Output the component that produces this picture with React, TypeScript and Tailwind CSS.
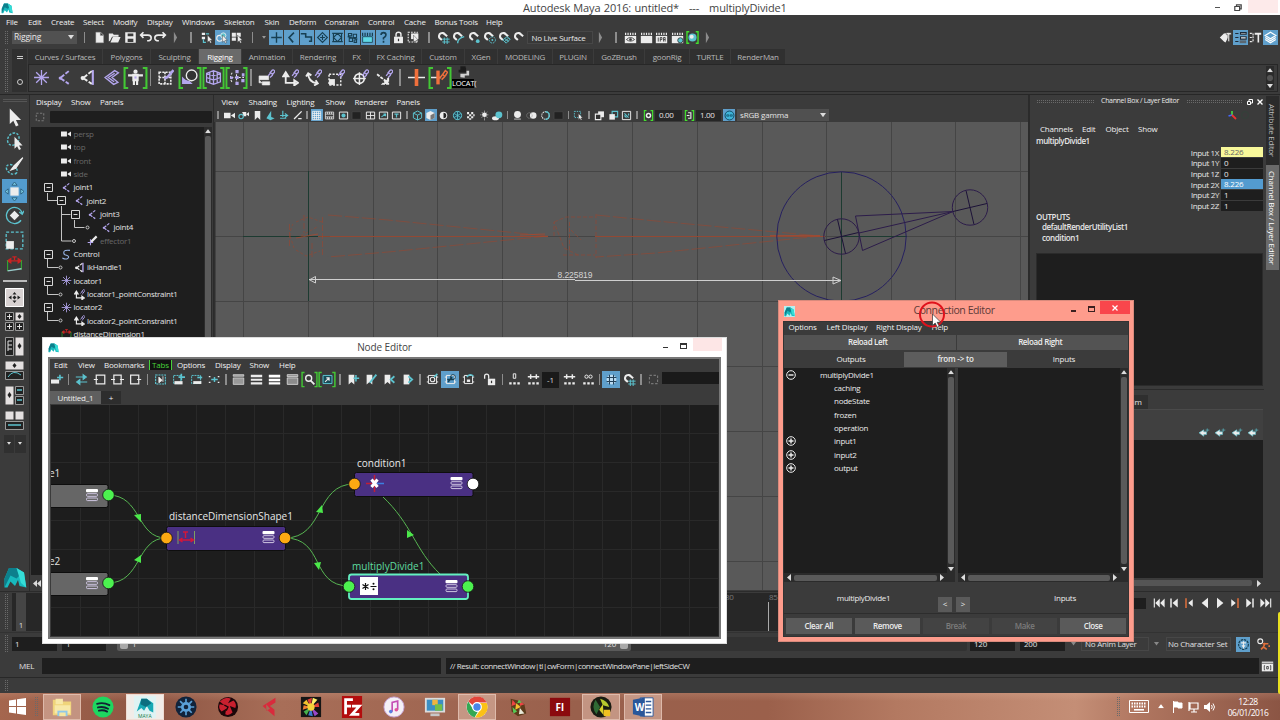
import React from "react";
import clsx from "clsx";

const C = "#5cc3cf"; // cyan
const P = "#b4a6ee"; // purple
const W = "#ececec";
const N = "#173f52"; // navy, for icons on a blue cell

const magnet = <path d="M3 8.5A4 4 0 0 1 10 4.500L12.500 6.500M3 8.500L6 11" fill="none" stroke={W} strokeWidth="2.6" />;
const clap = (
  <>
    <path d="M1 6h14v9H1z" fill={W} />
    <path d="M2 2v3M5 2v3M8 2v3M11 2v3M14 2v3" stroke={W} strokeWidth="1.5" />
  </>
);
const link = <path d="M9.500 6.500l2-2.500a1.500 1.500 0 0 1 2 2l-2.200 2M11 4l2.500-3a1.500 1.500 0 0 1 2 2L13 6" fill="none" stroke={P} strokeWidth="1.2" />;
const graph = <path d="M3 3h10v10H3zM1 5h2M1 11h2M13 5h2M13 11h2" fill="none" stroke={W} strokeWidth="1.2" />;
const dots = <path d="M1.500 11.500h3V14h-3zM6.500 11.500h3V14h-3zM11.500 11.500h3V14h-3z" fill={W} />;
const arrow = <path d="M8 5v9l2-2 1.500 3 1.500-.8-1.500-2.700H14z" fill={W} stroke="#333" strokeWidth=".5" />;
const bookmark = <path d="M2 2h7v12l-3.500-3L2 14z" fill={W} />;
const frame = <path d="M2 3h12v10H2z" fill="none" stroke={W} strokeWidth="1.4" />;

const icons: Record<string, React.ReactNode> = {
  file: <path d="M3.500 1.500h6L13 5v9.500H3.500zM9 1.500v4h4" fill={W} stroke="#999" strokeWidth=".5" />,
  open: <path d="M1 13V3h5l1 1.500h6V7H5L2.500 12M3 14l3-6.500h9.500L12.500 14z" fill={W} />,
  save: <path d="M1.500 1.500h13v13h-13zM4.500 3v3.500h7V3zM4.500 9.500v4h7v-4z" fill={W} fillRule="evenodd" />,
  undo: <path d="M2 5h9q4 0 4 3.500T10 12M5.500 1.500L2 5l3.500 3.500" fill="none" stroke={W} strokeWidth="2" />,
  redo: <path d="M14 5H5q-4 0-4 3.500T6 12M10.500 1.500L14 5l-3.500 3.500" fill="none" stroke={W} strokeWidth="2" />,
  bar: <path d="M6 1l4 7-4 7z" fill="#8c8c8c" />,
  selh: <><path d="M1 2h4v3H1zM1 7h4v3H1z" fill={W} /><path d="M6 3.500h4M3 10v4h3" stroke={C} fill="none" strokeWidth="1.5" />{arrow}</>,
  selo: <><circle cx="4.500" cy="9" r="3.600" fill="none" stroke={W} strokeWidth="1.4" /><circle cx="9" cy="5.500" r="3.200" fill={C} stroke={W} />{arrow}</>,
  selc: <><path d="M1 2h5v5H1zM7 2h5v5H7zM1 8h5v4H1z" fill={W} />{arrow}</>,
  plus: <path d="M8 1.500v13M1.500 8h13" stroke={N} strokeWidth="1.7" />,
  angle: <path d="M11 2L5 8l5 6" stroke={N} strokeWidth="2" fill="none" />,
  curve: <path d="M1 3.500h6v4h7v5h-3" stroke={N} strokeWidth="1.9" fill="none" />,
  diamond: <path d="M8 2l6 6-6 6-6-6zM8 5v6M5 8h6" stroke={N} strokeWidth="1.4" fill="none" />,
  lattice: <path d="M3 3h10v10H3zM3 8l5-5 5 5-5 5zM1.500 3h3M11.500 3h3M1.500 13h3M11.500 13h3" stroke={N} strokeWidth="1.4" fill="none" />,
  dyn: <path d="M3 3h4v3H3zM9 4h4v4H9zM4 9h4v4H4zM10 11h3v3h-3zM2 7l12 3" stroke={N} strokeWidth="1.3" fill="none" />,
  rend: <><path d="M2 7h12v7H2z" fill="#5fd8e4" stroke={N} /><path d="M2 2v4M5 2v4M8 2v4M11 2v4M14 2v4" stroke={N} strokeWidth="1.5" /></>,
  quest: <path d="M5 5q0-3 3-3t3 3q0 2-3 3.500v2M8 12v2.500" stroke={N} strokeWidth="2" fill="none" />,
  lock: <><path d="M2.500 7h11v8h-11z" fill={W} /><path d="M5 7V4q0-2.500 3-2.500T11 4v3" fill="none" stroke={W} strokeWidth="1.8" /><path d="M8 9.500v3" stroke="#333" strokeWidth="1.5" /></>,
  unlock: <><path d="M6 7h9v8H6z" fill={W} /><path d="M7 7V4q0-2.500-2.500-2.500T2 4v3" fill="none" stroke={W} strokeWidth="1.6" /><path d="M10.500 9.500v3" stroke="#333" strokeWidth="1.5" /></>,
  hili: <><path d="M1.500 1.500h11v12h-11z" fill="none" stroke={W} strokeWidth="1.4" strokeDasharray="2 1.500" /><path d="M5 3h9v7H5z" fill={W} />{arrow}</>,
  mgrid: <>{magnet}<path d="M9 8v8M12.500 8v8M6.500 10h9M6.500 13.500h9" stroke={C} strokeWidth="1.200" /></>,
  mcurve: <>{magnet}<path d="M7 15q0-6 8-8" stroke={C} strokeWidth="1.7" fill="none" /></>,
  mpoint: <>{magnet}<circle cx="12" cy="12.500" r="2.300" fill={C} /></>,
  mproj: <>{magnet}<circle cx="11.500" cy="11" r="3.800" fill="none" stroke={C} strokeDasharray="2 1.200" strokeWidth="1.200" /><circle cx="11.500" cy="11" r="1.200" fill={C} /></>,
  mplane: <>{magnet}<path d="M6 11l5-4 4 3-5 5zM8 9l5 4M8 13l5-4" fill="none" stroke={C} strokeWidth="1.200" /></>,
  mlive: magnet,
  clapeye: <>{clap}<path d="M3 10.500q5-5 10 0q-5 4-10 0z" fill="none" stroke="#333" /><circle cx="8" cy="10.500" r="1.600" fill="#333" /></>,
  clap,
  clapipr: <>{clap}<path d="M4 8v5M6.500 13V8h2v2.500h-2M10.500 13V8h2v5M10.500 10.500h2" fill="none" stroke="#333" /></>,
  clapset: <>{clap}<circle cx="11.500" cy="11.500" r="3.200" fill={C} stroke="#333" /></>,
  render: <><path d="M4 1H1.200v14H4M12 1h2.800v14H12" stroke="#43e02f" strokeWidth="1.700" fill="none" /><circle cx="8" cy="8" r="5" fill={C} /><circle cx="7" cy="7" r="2.500" fill={W} /></>,
  modkit: <><path d="M1 8l5-5v10zM6 3l6-1v4l-4 8-2-1z" fill={W} /><path d="M9 2h6v2.500h-2V13h-2V4.500H9z" fill={W} stroke="#333" strokeWidth=".6" /></>,
  attred: <><path d="M1.500 3h4M1.500 8h4M1.500 13h4M8 2h7v2H8zM8 7h7v3H8z" stroke="#1d2a38" fill={W} strokeWidth="1.3" /><path d="M7 11.500h8V15H7z" fill="#5b6770" /></>,
  toolset: <><path d="M1 3h4M1 8h4M1 13h4M5 3v10" stroke={W} strokeWidth="1.400" strokeDasharray="2.500 1" /><path d="M7 2h8v2.500h-2.500V14h-2V4.500H7z" fill={W} /></>,
  layers: <path d="M8 1.500l6.500 4L8 9.500l-6.500-4zM1.500 8L8 12l6.500-4M1.500 10.500L8 14.500l6.500-4" fill="none" stroke="#fff" strokeWidth="1.5" />,
  // shelf
  locator: <path d="M8 1v14M1 8h14M3 3l10 10M13 3L3 13" stroke={P} strokeWidth="1.2" />,
  joint: <><path d="M12 2L4 8.500 12 14" fill="none" stroke={P} strokeWidth="1.800" strokeDasharray="4 1.500" /><circle cx="4" cy="8.500" r="1.500" fill={P} /></>,
  ik: <><path d="M13 1v14" stroke={P} strokeWidth="2" /><path d="M12 2L4 8.500 12 14" stroke={W} strokeWidth="1.800" fill="none" strokeDasharray="4 1.500" /><circle cx="3.500" cy="8.500" r="2" fill={W} /></>,
  bind: <path d="M11 1.500L2 8l8 6.500 4-2L8.500 8l6-4.500zM11 4L5 8l5.500 4" fill="none" stroke={P} strokeWidth="1.3" />,
  human: <><circle cx="8" cy="2.500" r="2" fill={W} /><path d="M1 6h14M6 5.500h4v5H6zM6.500 10v5M9.500 10v5" stroke={W} strokeWidth="2" fill={W} /><path d="M7 7h2v2H7z" fill={P} /></>,
  paintw: <><path d="M2 3h11v11H2zM2 8h11M7.500 3v11" fill="none" stroke={W} strokeWidth="1.500" strokeDasharray="2 1" /><path d="M15.500 1L10 7.500 7 9" stroke={P} strokeWidth="2.400" fill="none" /></>,
  blend: <><path d="M1 14V7q3 4 7 4l3 3z" fill={P} /><circle cx="10" cy="6" r="5" fill="#333" stroke={W} strokeWidth="1.3" /></>,
  cage: <path d="M1.500 4L8 1.500 14.500 4v8L8 14.500 1.500 12zM1.500 4L8 6.500 14.500 4M8 1.500v13M1.500 8L8 10.500 14.500 8M4.500 3v10M11.500 3v10" fill="none" stroke={P} strokeWidth="1.200" />,
  cluster: <><path d="M8 1.500v13M3 8h12M4 3.500A7 7 0 0 0 4 12.500" fill="none" stroke={W} strokeDasharray="2 1.500" /><path d="M7 1h3v3H7zM13 4h2.500v3H13zM7 6.500h3v3H7zM12.500 9.500h3v3h-3zM7 12h3v3H7zM2 7h2.500v2.500H2z" fill={P} /></>,
  parent: <><path d="M1 6.500h9V10H1zM4 12h7v3H4zM1 10v3h3" fill={W} stroke={W} strokeWidth=".6" />{link}</>,
  pointc: <><path d="M3.500 5v8H13M3.500 3L1 7h5zM15 13l-3.500-2.500v5z" fill="none" stroke={W} strokeWidth="1.700" />{link}</>,
  orient: <><path d="M3 4q0 8 8 9.500M1 7l2-3 3 2M8.500 15.500L12 13.500l-2-3" fill="none" stroke={W} strokeWidth="1.800" />{link}</>,
  scalec: <><path d="M1 5h11v10H1z" fill="none" stroke={W} strokeWidth="1.400" strokeDasharray="2 1.300" /><path d="M1 9.500h5.500V15H1z" fill={W} />{link}</>,
  aim: <><circle cx="7" cy="9" r="4.500" fill="none" stroke={W} strokeWidth="1.600" /><path d="M7 3v12M1 9h12" stroke={W} strokeWidth="1.400" />{link}</>,
  pole: <><path d="M1 5l9 7M11.500 9v5h-5z" stroke={W} strokeWidth="1.700" fill={W} strokeDasharray="3 1" />{link}</>,
  orange: <><path d="M0 8h16" stroke={W} strokeWidth="1.4" /><path d="M6.300 0h3.400v16H6.300z" fill="#f0703c" /></>,
  orangel: <><path d="M0 8h9" stroke={W} strokeWidth="1.4" /><path d="M5 1.500h3.200v13H5z" fill="#f0703c" /><path d="M8 9l3-4 2 2-3 3M11 5l2.500-3.500 2 1.500-2 3.500" fill="none" stroke="#f0703c" strokeWidth="1.4" /></>,
  python: <><path d="M5 1.500h6v6H5z" fill="#1c1c1c" /><path d="M3 7h7V3" fill="none" stroke="#1c1c1c" strokeWidth="3" /><path d="M5 14v-4h7V6.500h3V12h-5v2.500z" fill="#d0d0d0" /></>,
  // toolbox
  cursor: <path d="M4 .5v13l3-2.800L9.200 15.500l2.200-1L9.200 10h4.300z" fill={W} />,
  lasso: <><ellipse cx="7" cy="6" rx="4.500" ry="5.500" transform="rotate(35 7 6)" fill="none" stroke={C} strokeWidth="1.200" strokeDasharray="2 1.200" /><path d="M8 4v10l2.200-2 1.600 3.200 1.700-.8-1.700-3h3z" fill={W} /></>,
  paint: <><ellipse cx="6" cy="10.500" rx="5" ry="3.500" transform="rotate(35 6 10)" fill="none" stroke={C} strokeWidth="1.200" strokeDasharray="2 1.200" /><path d="M15 .5L8 7l-3 4 4-1.500z" fill={W} stroke={W} /></>,
  move: <><path d="M4.500 4.500h7v7h-7z" fill={W} /><path d="M8 0l2.200 2.700H5.800zM8 16l2.200-2.700H5.800zM0 8l2.700-2.200v4.400zM16 8l-2.700-2.200v4.400z" fill="#7ccbe6" stroke="#285a77" strokeWidth=".7" /></>,
  rotate: <><path d="M8 4l4 4-4 4-4-4z" fill={W} /><path d="M13.500 12A6.800 6.800 0 1 1 14.500 6M16 4l-1.500 3-2.500-2" fill="none" stroke={C} strokeWidth="1.100" /></>,
  scale: <><path d="M1 1h14v14H1z" fill="none" stroke={C} strokeDasharray="2.500 1.500" strokeWidth="1.100" /><path d="M1 8.500h6.500V15H1z" fill={W} /></>,
  dist: <><path d="M1.500 4.500h13M1.500 4.500l3-2v4zM14.500 4.500l-3-2v4zM6 .8h4M8 .8v3" fill="#c22" stroke="#c22" strokeWidth="1.2" /><path d="M1.500 4v10M14.500 4v9" stroke="#3a3" /><path d="M1.500 14l13-2" stroke="#9cc" strokeWidth="1.2" /></>,
  // panel bar
  cam: <path d="M0 4h9.500v8H0zM10 8l6-4v8z" fill={W} />,
  camb: <><circle cx="4.500" cy="9.500" r="3.200" fill="none" stroke={C} strokeWidth="1.700" /><path d="M6 3h6v6H8.500zM12 6l4-3v6z" fill={W} /></>,
  book: <path d="M4 1.500h8v13l-4-4-4 4z" fill={W} />,
  img: <path d="M2 12L9 1v9l5 2-6 3z" fill={C} />,
  pan: <path d="M7 1v9M3 8h11M3 12h9M10 5l4 3-4 3" fill="none" stroke={C} strokeWidth="1.700" />,
  grease: <path d="M14 2L3 13M9 12.500h5" stroke={W} strokeWidth="2" />,
  grid: <path d="M2 2h12v12H2zM5 2v12M8 2v12M11 2v12M2 5h12M2 8h12M2 11h12" fill="none" stroke="#f4f4f4" strokeWidth="1.1" />,
  film: <path d="M2 3h12v10H2zM2 6h12M2 10h12M5 3v3M8 3v3M11 3v3M5 10v3M8 10v3M11 10v3" fill="none" stroke={W} strokeWidth="1.100" />,
  gate: <>{frame}<circle cx="8" cy="8" r="3" fill={C} /></>,
  dim: <path d="M1.500 2.500h13v11h-13z" fill="#222" stroke="#4a4a4a" />,
  chart: <>{frame}<path d="M8 3v10M2 8h12" stroke={W} strokeWidth="1.300" /></>,
  safe: <>{frame}<path d="M5 10l6-4M11 9V6H8" stroke={C} strokeWidth="1.600" fill="none" /></>,
  title: <>{frame}<path d="M5 6h6M8 6v5" stroke={C} strokeWidth="1.800" /></>,
  cube: <path d="M8 1.500l6 3v7l-6 3-6-3v-7zM2 4.500l6 3 6-3M8 7.500v7" fill="none" stroke={C} strokeWidth="1.400" />,
  cubes: <><path d="M8 1.500l6 3v7l-6 3-6-3v-7z" fill={W} /><path d="M8 7.500l6-3v7l-6 3z" fill="#777" /></>,
  half: <><circle cx="8" cy="8" r="5.500" fill={W} /><path d="M8 4a4 4 0 0 1 0 8z" fill="#222" /></>,
  wire: <><circle cx="8" cy="8" r="6" fill="#245" stroke={C} strokeWidth="1.400" /><path d="M3 5l10 6M13 5L3 11M8 2v12" stroke={C} strokeWidth="1.200" /></>,
  check: <path d="M3 3h3v3H3zM9 3h3v3H9zM6 6h3v3H6zM12 6h2v3h-2zM3 9h3v3H3zM9 9h3v3H9zM6 12h3v2H6z" fill={W} />,
  light: <><circle cx="8" cy="7" r="3.300" fill={W} /><path d="M8 1v14M2 7h12M4 3l8 8M12 3l-8 8" stroke={W} strokeDasharray="1.500 1" /></>,
  shadow: <><ellipse cx="5" cy="12" rx="5" ry="3" fill={W} /><circle cx="10" cy="7" r="5" fill={C} /></>,
  ao: <><circle cx="8" cy="6.500" r="5" fill={W} /><path d="M3 12h10v2.500H3z" fill="#888" /></>,
  blur: <><circle cx="10.500" cy="8" r="4.800" fill={W} /><circle cx="5" cy="8" r="4" fill="none" stroke="#999" strokeDasharray="2 1" /></>,
  aa: <><circle cx="8" cy="8" r="5.500" fill="none" stroke={W} strokeWidth="1.500" strokeDasharray="2 1" /><path d="M8 2.500a5.500 5.500 0 0 1 0 11" fill="none" stroke={C} strokeWidth="2" /></>,
  iso: <><path d="M2 2h9v9H2z" fill="none" stroke={C} strokeWidth="1.400" strokeDasharray="2 1.500" />{arrow}</>,
  xray: <><path d="M6 2h8.500v8.500H6z" fill={W} /><path d="M2 6h8v8H2z" fill="#333" stroke={W} strokeWidth="1.600" /></>,
  xrayc: <><path d="M6 2h8v8H6z" fill="none" stroke={C} strokeWidth="1.600" /><path d="M2 6h8v8H2z" fill={W} /></>,
  xrayj: <><path d="M2 2h12v12H2z" fill="none" stroke={W} strokeWidth="1.400" /><path d="M5 5l6 6M5 8l3 3M11 5v3" stroke={C} strokeWidth="1.700" /></>,
  expo: <><path d="M5 1H2v14h3M11 1h3v14h-3" stroke="#43e02f" strokeWidth="1.700" fill="none" /><circle cx="8" cy="8" r="4" fill={W} /><circle cx="8" cy="8" r="1.700" fill="#222" /></>,
  gam: <><path d="M5 1H2v14h3M11 1h3v14h-3" stroke="#43e02f" strokeWidth="1.700" fill="none" /><path d="M6 4h4v8H6M4 8h4" stroke={W} strokeWidth="1.600" fill="none" /></>,
  color: <><circle cx="8" cy="8" r="6.500" fill="#3fb4d8" stroke="#0e4a63" strokeWidth="1.400" /><path d="M4 7h3v2H4zM9 7h3v2H9z" fill="none" stroke="#0e4a63" /></>,
  // node editor
  nadd: <><path d="M0 8h10v5H0z" fill={W} /><path d="M11 2v7M7.500 5.500H15" stroke={C} strokeWidth="2" /></>,
  sync: <path d="M1 5h11M10 2l4 3-4 3zM15 11H4M6 8l-4 3 4 3z" fill={C} stroke={C} strokeWidth="1.300" />,
  nin: <path d="M4 2.500h10.500v11H4zM1 8h5" fill="none" stroke={W} strokeWidth="1.500" />,
  nio: <path d="M3.500 2.500h9v11h-9zM0 8h5M11 8h5" fill="none" stroke={W} strokeWidth="1.500" />,
  nout: <path d="M2 2.500h10v11H2zM10 8h5" fill="none" stroke={W} strokeWidth="1.500" />,
  nsel: <><path d="M2 2.500h12v11H2z" fill="none" stroke={C} strokeWidth="1.400" strokeDasharray="2.500 1" /><path d="M6 5v7l4-3zM11 4v7" fill={W} stroke={W} /></>,
  nad: <><path d="M2 3h9v10H2z" fill="none" stroke={C} strokeDasharray="2.500 1" strokeWidth="1.200" /><path d="M3 10h10v4H3z" fill={W} /><path d="M11.500 1v8M8 5h8" stroke={C} strokeWidth="2" /></>,
  nrem: <><path d="M2 3h11v10H2z" fill="none" stroke={C} strokeDasharray="2.500 1" strokeWidth="1.200" /><path d="M4 10h10v3.500H4z" fill={W} /><path d="M9 5.500h6" stroke={C} strokeWidth="2" /></>,
  narr: <><path d="M1 4.500h3M1 11.500h3M12 4.500h3M12 11.500h3" stroke={W} strokeWidth="1.600" strokeDasharray="2 1" /><path d="M4 8h8M8 5v6" stroke={C} strokeWidth="1.800" /></>,
  l1: <path d="M1.500 2h13v2h-13zM1.500 6h13v8h-13z" fill="#999" stroke={W} strokeWidth=".8" />,
  l2: <path d="M1 2h14v3.300H1zM1 7h14v2.500H1zM1 11.500h14V14H1z" fill={W} />,
  l3: <path d="M1 2h14v3.500H1zM1 7h14v3H1zM1 11.300h14V14.300H1z" fill="#fff" />,
  l4: <path d="M1.500 2h13v2.500h-13zM1.500 6h13v8h-13z" fill="#8c8c8c" stroke={W} strokeWidth=".9" />,
  search: <><circle cx="7" cy="6.500" r="3.700" fill="none" stroke={W} strokeWidth="1.700" /><path d="M9.500 9.500L14 14" stroke={W} strokeWidth="2.200" /></>,
  nfr: <><path d="M2.500 3h11v10h-11z" fill="#174a57" stroke={C} strokeWidth="1.200" /><path d="M5 11l5-5M6.500 6H10v3.500" stroke={W} strokeWidth="1.400" fill="none" /></>,
  bk1: <>{bookmark}<path d="M11 2.500v8M8 6.500h7" stroke={C} strokeWidth="1.900" /></>,
  bk2: <>{bookmark}<path d="M14 2L6 12" stroke={C} strokeWidth="2.400" /></>,
  bk3: <>{bookmark}<path d="M14 4L9.500 8l4.500 4" stroke={C} strokeWidth="2.200" fill="none" /></>,
  bk4: <><path d="M2 2h7v12H2z" fill={W} /><path d="M8 4l4.500 4L8 12" stroke={C} strokeWidth="2.200" fill="none" /></>,
  g1: <>{graph}<circle cx="8" cy="8" r="2.800" fill="none" stroke={W} strokeWidth="1.400" /><path d="M10 5l4-4" stroke={C} strokeWidth="2" /></>,
  g2: <>{graph}<path d="M4 8h8M5 11l5-6" stroke={N} strokeWidth="1.800" /><circle cx="11" cy="5" r="3" fill="none" stroke={N} strokeWidth="1.200" /></>,
  g3: <>{graph}<path d="M6 8h4v3H6z" fill={W} /><path d="M6 5q4-5 8-1" stroke={C} fill="none" strokeWidth="1.800" /></>,
  d0: <><path d="M6.500 1h3v5.500h-3z" fill="none" stroke={W} strokeWidth="1.200" />{dots}</>,
  d1: <><path d="M1 4.500h14M4.500 1.500v6M11.500 1.500v6" stroke={W} strokeWidth="1.800" />{dots}</>,
  d3: <><circle cx="5.500" cy="4.500" r="2" fill="none" stroke={W} strokeWidth="1.200" /><circle cx="10.500" cy="4.500" r="2" fill="none" stroke={W} strokeWidth="1.200" />{dots}</>,
  hash: <><circle cx="8" cy="8" r="6" fill="#bcdcf2" /><path d="M5.500 2v12M10.500 2v12M2 5.500h12M2 10.500h12" stroke="#23425a" strokeWidth="1.300" /></>,
  dashbox: <path d="M3 3h10v10H3z" fill="none" stroke="#777" strokeWidth="1.400" strokeDasharray="3 2" />,
  // outliner
  crv: <path d="M13 2Q4 1 4 5t4 4q5 2 2 4.500T2 13" fill="none" stroke="#9ab8ea" strokeWidth="1.500" />,
  eff: <><path d="M14 2L6 10" stroke={W} strokeWidth="3.200" /><path d="M5 6v9M1 11h8" stroke={P} strokeWidth="1.500" /></>,
  // playback
  pstart: <path d="M1 2h1.500v12H1zM9 2v12L3 8zM15.500 2v12l-6-6z" fill={W} />,
  pprev: <path d="M3 2h2v12H3zM13 2v12L6 8z" fill={W} />,
  pkeyp: <><path d="M3 1.500h2v13H3z" fill="#e0703c" /><path d="M13 3v10L7 8z" fill={W} /></>,
  pback: <path d="M12 1v14L3.500 8z" fill={W} />,
  pplay: <path d="M4 1v14l8.500-7z" fill={W} />,
  pkeyn: <><path d="M11 1.500h2v13h-2z" fill="#e0703c" /><path d="M3 3v10l6-5z" fill={W} /></>,
  pnext: <path d="M11 2h2v12h-2zM3 2v12l7-6z" fill={W} />,
  pend: <path d="M13.500 2H15v12h-1.500zM7 2v12l6-6zM.5 2v12l6-6z" fill={W} />,
  key: <><circle cx="8" cy="8" r="6" fill="none" stroke={N} strokeWidth="1.400" strokeDasharray="3 1" /><path d="M8 4v9M5 6h6M6 9l2 2 2-2" stroke={W} strokeWidth="1.300" fill="none" /></>,
  runner: <><circle cx="4" cy="4" r="3" fill="none" stroke={W} strokeWidth="1.400" /><path d="M10 6l-2 5 4 3M5 14l3-3M7 7h7M14 10h2" stroke="#e0703c" strokeWidth="2" fill="none" /></>,
  script: <><path d="M1 2h14v12H1z" fill={W} /><path d="M1 4h14" stroke="#444" /><path d="M5 7H4v5h1M11 7h1v5h-1M7 8h2v3H7z" stroke="#333" fill="none" /></>,
  lay: <path d="M0 8.500L7 4v3h4v4H7v2.500zM12 2v5M9.500 4.500h5.500" fill={W} stroke={C} strokeWidth=".9" />,
};

function Icon({ n, s = 12 }: { n: string; s?: number }) {
  return (
    <svg width={s} height={s} viewBox="0 0 16 16" className="shrink-0">
      {icons[n]}
    </svg>
  );
}

function MayaLogo({ s }: { s: number }) {
  return (
    <svg width={s} height={s} viewBox="0 0 16 16" className="shrink-0">
      <path d="M1 15V9l3-7h5l5 3 1.500 10-4.500-1-1-4-2 4-3-3-2 4z" fill="#17b9bd" />
      <path d="M4 2h5l4 3-4 4-4-2-4 8V9z" fill="#0d7f8c" />
      <path d="M9 2l5 3 1.500 10-3.500-3z" fill="#35dcd6" />
    </svg>
  );
}

// [icon, cell width, variant]; "|" draws a divider, "" leaves a blank
type Cell = [string, number, ("on" | "br")?];

function Strip({ cells, size = 12, className }: { cells: Cell[]; size?: number; className?: string }) {
  return (
    <div className={clsx("flex items-center shrink-0", className)}>
      {cells.map(([n, w, v], i) => (
        <div key={i} style={{ width: w }} className="flex shrink-0 items-center justify-center h-full">
          {n === "|" && <span className="w-[1.5px] h-[70%] bg-[#8c8c8c]" />}
          {n !== "|" && n !== "" && (
            <span
              className={clsx(
                "flex items-center justify-center h-full",
                v === "on" && "w-full bg-[#5f9fcb]",
                v === "br" && "w-full relative"
              )}
            >
              <Icon n={n} s={size} />
              {v === "br" && (
                <svg className="absolute inset-0 w-full h-full" viewBox="0 0 24 24" preserveAspectRatio="none">
                  <path d="M5 2H1.500v20H5M19 2h3.500v20H19" fill="none" stroke="#43c735" strokeWidth="2" />
                </svg>
              )}
            </span>
          )}
        </div>
      ))}
    </div>
  );
}

function Menu({ items, className }: { items: [string, number][]; className?: string }) {
  return (
    <div className={clsx("flex items-center shrink-0 whitespace-nowrap text-[8px] tracking-[-0.2px] text-[#f0f0f0]", className)}>
      {items.map(([t, w]) => (
        <span key={t} style={{ width: w }} className="shrink-0">
          {t === "Tabs" ? (
            <span className="inline-block px-[2px] bg-[#111] text-[#47d13a] border-x border-[#47d13a] leading-[10px]">{t}</span>
          ) : (
            t
          )}
        </span>
      ))}
    </div>
  );
}

function Tri({ s = 6, c = "#ddd", up }: { s?: number; c?: string; up?: boolean }) {
  return (
    <svg width={s} height={s * 0.7} viewBox="0 0 10 7" className={clsx("shrink-0", up && "rotate-180")}>
      <path d="M0 0h10L5 7z" fill={c} />
    </svg>
  );
}

function TriH({ right }: { right?: boolean }) {
  return (
    <svg width="4" height="7" viewBox="0 0 4 7" className={clsx("shrink-0", right && "rotate-180")}>
      <path d="M4 0v7L0 3.500z" fill="#ddd" />
    </svg>
  );
}

function Grip({ className }: { className?: string }) {
  return <div className={clsx("shrink-0 bg-[conic-gradient(#6a6a6a_25%,transparent_0)] bg-[size:2px_2px]", className)} />;
}

const shelfTabs: [string, number][] = [
  ["Curves / Surfaces", 75], ["Polygons", 48], ["Sculpting", 48], ["Rigging", 43], ["Animation", 51],
  ["Rendering", 51], ["FX", 26], ["FX Caching", 52], ["Custom", 43], ["XGen", 33], ["MODELING", 55],
  ["PLUGIN", 41], ["GoZBrush", 51], ["goonRig", 45], ["TURTLE", 41], ["RenderMan", 55],
];

function Header() {
  return (
    <>
      <div className="h-[15px] bg-white flex items-center shrink-0">
        <div className="pl-[1px]"><MayaLogo s={12} /></div>
        <div className="flex-1 pl-[510px] text-[11px] tracking-[-0.63px] [word-spacing:0.6px] text-[#444] whitespace-pre leading-[15px]">
          <span className="tracking-[-0.14px]">Autodesk Maya 2016: untitled*   ---   multiplyDivide1</span>
        </div>
        <div className="w-[5px] h-[1.5px] bg-[#555] mr-[14px]" />
        <svg width="8" height="8" viewBox="0 0 8 8" className="mr-[6px]">
          <path d="M2.500 2V.8h4.700v4H6M.8 2.500h4.800v4H.8z" fill="none" stroke="#444" strokeWidth="1.2" />
        </svg>
        <div className="w-[30px] h-[13px] self-start bg-[#fdeaea] mr-[2px]" />
      </div>
      <Menu
        className="h-[14px] pl-[6px]"
        items={[["File", 22], ["Edit", 23], ["Create", 32], ["Select", 30], ["Modify", 34], ["Display", 35], ["Windows", 42], ["Skeleton", 40.5], ["Skin", 24.5], ["Deform", 35.5], ["Constrain", 43.5], ["Control", 36], ["Cache", 30.5], ["Bonus Tools", 51.5], ["Help", 30]]}
      />
      <div className="h-[17px] flex items-center shrink-0 text-[8px] text-[#e8e8e8]">
        <Grip className="w-[4px] h-[14px] ml-[4px]" />
        <div className="ml-[4px] w-[65px] h-[13px] bg-[#515151] flex items-center justify-between pl-[2px] pr-[3px]">
          <span className="text-[8.5px] tracking-[-0.2px]">Rigging</span>
          <Tri />
        </div>
        <Strip
          size={13}
          className="h-[15px]"
          cells={[["|", 15], ["file", 14], ["open", 16], ["save", 16], ["undo", 15], ["redo", 15], ["bar", 14], ["|", 18], ["selh", 15], ["selo", 15, "on"], ["selc", 15], ["|", 15]]}
        />
        <div className="w-[8px] flex justify-center"><Tri s={4} c="#999" /></div>
        <div className="flex gap-[1px] ml-[1px]">
          {["plus", "angle", "curve", "diamond", "lattice", "dyn", "rend", "quest"].map((n) => (
            <div key={n} className="w-[14.3px] h-[15px] bg-[#5f9fcb] flex items-center justify-center"><Icon n={n} s={13} /></div>
          ))}
        </div>
        <Strip
          size={13}
          className="h-[15px]"
          cells={[["lock", 16], ["hili", 15], ["|", 15], ["mgrid", 15], ["mcurve", 15], ["mpoint", 15.5], ["mproj", 15.5], ["mplane", 15], ["mlive", 15]]}
        />
        <div className="w-[66px] h-[13px] border border-[#474747] bg-[#383838] pl-[3px] leading-[11px] whitespace-nowrap tracking-[-0.24px]">No Live Surface</div>
        <Strip size={13} className="h-[15px]" cells={[["bar", 15], ["|", 15], ["clapeye", 15], ["clap", 16], ["clapipr", 15], ["clapset", 15.5], ["render", 15.5], ["bar", 14]]} />
        <div className="flex-1" />
        <Strip size={13} className="h-[15px] mr-[2px]" cells={[["modkit", 15], ["attred", 15, "on"], ["toolset", 15], ["layers", 15, "on"]]} />
      </div>
      <div className="h-[46px] flex shrink-0 pt-[3px]">
        <Grip className="w-[4px] h-[43px] ml-[4px]" />
        <div className="ml-[4px] w-[15px] h-[43px] bg-[#303030] flex flex-col items-center justify-between py-[7px]">
          <span className="w-[6px] h-[3px] border-y border-[#ccc]" />
          <span className="w-[6px] h-[6px] rounded-full border border-[#ccc]" />
        </div>
        <div className="flex-1 flex flex-col ml-[1px]">
          <div className="flex h-[15px] text-[8px] whitespace-nowrap">
            {shelfTabs.map(([t, w]) => (
              <div
                key={t}
                style={{ width: w }}
                className={clsx(
                  "flex items-center justify-center pt-[1px] border-r border-[#3b3b3b] tracking-[-0.22px]",
                  t === "Rigging" ? "bg-[#6a6a6a] text-white" : "bg-[#303030] text-[#b9b9b9]"
                )}
              >
                {t}
              </div>
            ))}
          </div>
          <div className="h-[29px] border border-[#272727] bg-[#3b3b3b] flex items-center mr-[2px]">
            <Strip
              size={17}
              className="h-[24px] ml-[1px]"
              cells={[["locator", 23], ["joint", 23], ["ik", 23.5], ["bind", 23], ["human", 25, "br"], ["|", 6], ["paintw", 24], ["blend", 24, "br"], ["cage", 23, "br"], ["cluster", 23, "br"], ["|", 7], ["parent", 24], ["pointc", 23], ["orient", 23], ["scalec", 24], ["aim", 24], ["pole", 23], ["|", 9], ["orange", 23], ["orangel", 24, "br"]]}
            />
            <div className="w-[23px] h-[25px] flex flex-col items-center">
              <Icon n="python" s={14} />
              <span className="bg-black text-white text-[7.5px] leading-[9px] w-[22px] tracking-[-0.2px]">LOCAT(</span>
            </div>
            <div className="flex-1" />
            <div className="flex flex-col items-center gap-[3px] mr-[3px] bg-[#2b2b2b] w-[8px] py-[2px]">
              <Tri s={6} up />
              <span className="w-[6px] h-[6px] rounded-full bg-[#555]" />
              <Tri s={6} />
            </div>
          </div>
        </div>
      </div>
      <div className="h-[3px] border-b border-[#272727] shrink-0" />
    </>
  );
}

function Pane({ kind }: { kind: number }) {
  return (
    <svg width="19" height="19" viewBox="0 0 19 19">
      {kind === 0 && <><path d="M.5.5h18v18H.5z" fill="#d8d2d2" stroke="#fff" /><path d="M9.500 4l2 2.500h-4zM9.500 15l2-2.500h-4zM3.500 9.500l3-2v4zM15.500 9.500l-3-2v4zM9.500 7.500l2 2-2 2-2-2z" fill="#222" /></>}
      {kind === 1 && <><path d="M.5.500h8v8h-8zM.5 10.500h8v8h-8zM10.500 10.500h8v8h-8z" fill="#222" stroke="#999" /><path d="M10.500.500h8v8h-8z" fill="#e4e0e0" /><path d="M4.500 2v5M2 4.500h5M4.500 12v5M2 14.500h5M14.500 12v5M12 14.500h5" stroke="#ddd" /><path d="M14.500 2l2 2.500-2 2.500-2-2.500z" fill="#222" /></>}
      {kind === 2 && <><path d="M.5.500h8v18h-8z" fill="#222" stroke="#999" /><path d="M10.500.500h8v18h-8z" fill="#e4e0e0" /><path d="M3 4h4M3 8h4M3 12h4M3 4v10" stroke="#ddd" /><path d="M14.500 6l2 3-2 3-2-3z" fill="#222" /></>}
      {kind === 3 && <><path d="M.5.500h18v8H.5z" fill="#e4e0e0" /><path d="M.5 10.500h18v8H.5z" fill="#222" stroke="#999" /><path d="M3 16q5-8 13-2" fill="none" stroke={C} /><path d="M9.500 2l2 2.500-2 2.500-2-2.500z" fill="#222" /></>}
      {kind === 4 && <><path d="M.5.500h8v18h-8z" fill="#e4e0e0" /><path d="M10.500.500h8v8h-8zM10.500 10.500h8v8h-8z" fill="#222" stroke="#999" /><path d="M4.500 6l2 3-2 3-2-3z" fill="#222" /><path d="M12 4h5M12 14h5" stroke={C} strokeWidth="1.500" /></>}
      {kind === 5 && <><path d="M.5.500h8v8h-8zM10.500.500h8v8h-8z" fill="#e4e0e0" /><path d="M.5 10.500h18v8H.5z" fill="#222" stroke="#999" /><path d="M3 14h13" stroke={C} strokeWidth="1.500" /></>}
    </svg>
  );
}

function Toolbox() {
  return (
    <div className="w-[30px] shrink-0 flex flex-col items-center border-r border-[#2b2b2b] pt-[4px]">
      <div className="w-[24px] h-[3px] border-y border-[#555] mb-[3px]" />
      {["cursor", "lasso", "paint", "move", "rotate", "scale", "dist"].map((n) => (
        <div key={n} className={clsx("w-[25px] h-[24.6px] flex items-center justify-center", n === "move" && "bg-[#539bcd]")}>
          <Icon n={n} s={n === "dist" ? 17 : 19} />
        </div>
      ))}
      <div className="w-[24px] h-[1.5px] bg-[#bbb] mt-[3px] mb-[6px]" />
      <div className="flex flex-col gap-[5.6px]">
        {[0, 1, 2, 3, 4, 5].map((k) => <Pane key={k} kind={k} />)}
      </div>
      <div className="mt-[5px] flex gap-[1px] w-[22px]">
        <span className="flex-1 h-[18px] bg-[#303030] flex items-center justify-center"><Tri s={4} /></span>
        <span className="flex-1 h-[18px] bg-[#303030] flex items-center justify-center"><Tri s={4} /></span>
      </div>
      <div className="flex-1" />
      <div className="mb-[2px]"><MayaLogo s={24} /></div>
    </div>
  );
}

const nodes: [string, string, number, boolean?][] = [
  ["persp", "cam", 0, true], ["top", "cam", 0, true], ["front", "cam", 0, true], ["side", "cam", 0, true],
  ["joint1", "joint", 0], ["joint2", "joint", 13], ["joint3", "joint", 26.5], ["joint4", "joint", 40],
  ["effector1", "eff", 26.5, true], ["Control", "crv", 0], ["ikHandle1", "ik", 13.5], ["locator1", "locator", 0],
  ["locator1_pointConstraint1", "pointc", 13.5], ["locator2", "locator", 0], ["locator2_pointConstraint1", "pointc", 13.5],
  ["distanceDimension1", "dist", 0],
];

function Box({ x, y }: { x: number; y: number }) {
  return <path d={`M${x - 4} ${y - 4}h8v8h-8zM${x - 2} ${y}h4`} fill="#1e1e1e" stroke="#d8d8d8" />;
}

function Outliner() {
  return (
    <div className="w-[184px] shrink-0 flex flex-col border-r border-[#2b2b2b]">
      <Menu className="h-[14px] pl-[6px]" items={[["Display", 35], ["Show", 29], ["Panels", 40]]} />
      <div className="h-[15px] flex items-center pl-[4px] gap-[4px]">
        <Icon n="dashbox" s={12} />
        <div className="w-[162px] h-[12px] bg-[#1e1e1e] rounded-[1px]" />
      </div>
      <div className="flex flex-1 mt-[3px] ml-[1px]">
        <div className="w-[173px] bg-[#1e1e1e] relative pt-[.5px]">
          {nodes.map(([t, ic, pad, dim]) => (
            <div key={t} style={{ paddingLeft: 28 + pad }} className="h-[13.33px] flex items-center">
              <span className="w-[14.5px] flex items-center justify-center shrink-0"><Icon n={ic} s={ic === "cam" ? 10 : 11} /></span>
              <span className={clsx("text-[8px] tracking-[-0.26px] leading-[12px]", dim ? "text-[#686868]" : "text-[#e4e4e4]")}>{t}</span>
            </div>
          ))}
          <svg className="absolute left-0 top-0" width="80" height="213" viewBox="31 127 80 213" fill="none" stroke="#c4c4c4">
            <path d="M47.500 193v7.500h10M61.500 206v35h10M61.500 214.500h9M74.500 220v7.500h10M47.500 259v8.500h11M47.500 286v8.500h11M47.500 312v8.500h11" />
            <g fill="#1e1e1e"><circle cx="87.500" cy="227.500" r="1.500" /><circle cx="74" cy="241" r="1.500" /><circle cx="60.500" cy="267.500" r="1.500" /><circle cx="60.500" cy="294.500" r="1.500" /><circle cx="60.500" cy="320.500" r="1.500" /></g>
            <Box x={48.5} y={187.5} /><Box x={61.5} y={200.5} /><Box x={75.5} y={214.5} />
            <Box x={48.5} y={254.5} /><Box x={48.5} y={281.5} /><Box x={48.5} y={307.5} />
          </svg>
        </div>
        <div className="w-[8px] bg-[#2b2b2b] flex flex-col items-center pt-[2px] gap-[3px]">
          <Tri s={6} up />
          <div className="w-[6px] flex-1 bg-[#5a5a5a] rounded-[2px]" />
        </div>
      </div>
      <div className="h-[16px] flex items-center pl-[3px]"><TriH /><TriH /></div>
    </div>
  );
}

const purpleRing = (cx: number, cy: number) => (
  <g>
    <circle cx={cx} cy={cy} r="17.7" />
    <path d={`M${cx - 17} ${cy + 4}L${cx + 17} ${cy - 4}M${cx - 4} ${cy - 17}L${cx + 4} ${cy + 17}`} stroke="#1c1238" />
  </g>
);

function Viewport() {
  const xs = [243.5, 308.5, 373.5, 437.5, 502.5, 567.5, 632.5, 697.5, 762.5, 826.5, 891.5, 955.5, 1020.5];
  const ys = [171.5, 236.5, 301.5, 366.5, 431.5, 496.5, 561.5];
  return (
    <div className="w-[816px] shrink-0 flex flex-col border-r-2 border-[#2b2b2b]">
      <Menu className="h-[13px] pl-[7.5px]" items={[["View", 27], ["Shading", 38], ["Lighting", 39], ["Show", 29], ["Renderer", 42], ["Panels", 40]]} />
      <div className="h-[14px] flex items-center text-[8px] text-[#e4e4e4]">
        <Strip
          size={11}
          className="h-[12px]"
          cells={[["|", 8], ["cam", 15], ["camb", 13.5], ["book", 13], ["img", 13.5], ["pan", 13.5], ["grease", 13], ["|", 7], ["grid", 12.5, "on"], ["film", 13.5], ["gate", 13.5], ["dim", 13.5], ["chart", 13], ["safe", 13.5], ["title", 13.5], ["|", 7], ["cube", 14], ["cubes", 12.5, "on"], ["half", 13.5], ["wire", 13.5], ["check", 13.5], ["light", 13.5], ["shadow", 13.5], ["|", 6], ["ao", 14.5], ["blur", 13.5], ["aa", 13.5], ["dim", 13.5], ["|", 6], ["iso", 14], ["|", 7], ["xray", 14], ["xrayc", 13.5], ["xrayj", 13], ["|", 8], ["expo", 14]]}
        />
        <span className="w-[27px] h-[11px] leading-[10px] bg-[#262626] pl-[4px] tracking-[-0.3px]">0.00</span>
        <Strip size={11} className="h-[12px]" cells={[["gam", 14]]} />
        <span className="w-[25px] h-[11px] leading-[10px] bg-[#262626] pl-[4px] tracking-[-0.3px]">1.00</span>
        <Strip size={11} className="h-[12px] mx-[2px]" cells={[["color", 12, "on"]]} />
        <span className="w-[92px] h-[12px] bg-[#505050] pl-[3px] pr-[3px] flex items-center justify-between tracking-[-0.15px] leading-[10px]">
          <span>sRGB gamma</span> <Tri />
        </span>
      </div>
      <svg width="814" height="468" viewBox="214 122 814 468" className="bg-[#595959]" fill="none">
        <g stroke="#454545">
          {xs.map((x) => <path key={x} d={`M${x} 122V590`} />)}
          {ys.map((y) => <path key={y} d={`M215 ${y}H1029`} />)}
        </g>
        <path d="M214 122h1.500v468H214z" fill="#2f2f2f" />
        <path d="M243 236.500h87M308.500 171v130M841.500 172v129M841 236.500h66" stroke="#1d3b31" />
        <g stroke="#a0452c" opacity=".55">
          <path d="M296 222l12-5 14 5M290 236q0-6 3-12M296 250l10 6 14-5M290 236l4 12M301 236l16-9" strokeDasharray="3 2" />
          <path d="M289.500 224v24M322.500 217v40M304 215v18M312 243v14" strokeDasharray="6 2" />
          <path d="M328 215l60 5 160 16-160 16-60 5" strokeDasharray="14 3" />
          <path d="M554 222l12-5h30M554 236v-14l10 26 14 7M563 255h32M571 230l10 10M569.500 222v28M596 214v44" strokeDasharray="4 2" />
          <path d="M596 215l60 6 164 15-164 17-60 4" strokeDasharray="14 3" />
        </g>
        <path d="M296 238l22-4M318 236.500h230M520 235l25-1M595 236.500h230M770 235.500h50" stroke="#a64a30" opacity=".8" />
        <circle cx="841.5" cy="236.5" r="64.700" stroke="#262060" />
        <g stroke="#2c1c4a">
          {purpleRing(841.5, 236.5)}
          {purpleRing(970, 207.5)}
          <path d="M855.500 216L953 211.500L862.500 250.500zM859 233L953 211.500" />
        </g>
        <path d="M309 279.500H575M575 280.500H841" stroke="#cfcfcf" />
        <path d="M315.500 276.500v6.500l-6-3.200zM833 277v7l8-3.500z" stroke="#cfcfcf" />
        <text x="557.500" y="278" fontSize="8.5" fill="#d4d4d4" textLength="35" fontFamily="Liberation Sans, sans-serif">8.225819</text>
      </svg>
      <div className="flex-1" />
    </div>
  );
}

const attrs: [string, string][] = [["Input 1X", "8.226"], ["Input 1Y", "0"], ["Input 1Z", "0"], ["Input 2X", "8.226"], ["Input 2Y", "1"], ["Input 2Z", "1"]];

function ChannelBox() {
  return (
    <>
      <div className="w-[235px] shrink-0 flex flex-col pl-[6px] pr-[1px] text-[8px] text-[#e6e6e6]">
        <div className="h-[13px] flex items-center">
          <Grip className="w-[58px] h-[4px]" />
          <span className="flex-1 text-center text-[7px] tracking-[-0.33px]">Channel Box / Layer Editor</span>
          <Grip className="w-[56px] h-[4px] mr-[5px]" />
          <span className="flex gap-[4px] mr-[1px]">
            <svg width="6" height="6" viewBox="0 0 6 6"><path d="M2 2V.5h3.500V4H4M.5 2.500h3v3h-3z" fill="none" stroke="#fff" /></svg>
            <svg width="6" height="6" viewBox="0 0 6 6"><path d="M.5.5l5 5M5.500.5l-5 5" stroke="#fff" strokeWidth="1.400" /></svg>
          </span>
        </div>
        <div className="h-[14px] flex items-center justify-end gap-[4px] pr-[15px]">
          <svg width="10" height="10" viewBox="0 0 10 10" fill="none" strokeWidth="1.800"><path d="M5 5V1" stroke="#4c4" /><path d="M5 5L1.500 6" stroke="#46f" /><path d="M5 5l4 4" stroke="#e33" /></svg>
          <span className="w-[8px] h-[8px] rounded-full border border-[#33423a]" />
        </div>
        <Menu className="h-[13px] pl-[4px]" items={[["Channels", 42], ["Edit", 23.5], ["Object", 32.5], ["Show", 30]]} />
        <div className="h-[12px] leading-[12px] font-semibold tracking-[-0.46px]">multiplyDivide1</div>
        {attrs.map(([k, v], i) => (
          <div key={k} className="h-[10.67px] flex items-center justify-end gap-[2px]">
            <span className="pt-[1px] tracking-[-0.36px]">{k}</span>
            <span
              className={clsx(
                "w-[42px] h-[10px] leading-[9px] pl-[3px] mr-[1px] tracking-[-0.2px]",
                i === 0 ? "bg-[#f8f89a] text-[#666]" : i === 3 ? "bg-[#539bd0] text-white" : "bg-[#1e1e1e]"
              )}
            >
              {v}
            </span>
          </div>
        ))}
        <div className="mt-[.5px] h-[11px] leading-[11px] font-semibold tracking-[-0.38px]">OUTPUTS</div>
        <div className="h-[10.5px] leading-[10px] font-semibold pl-[6px] tracking-[-0.44px]">defaultRenderUtilityList1</div>
        <div className="h-[10.5px] leading-[10px] font-semibold pl-[6px] tracking-[-0.4px]">condition1</div>
        <div className="h-[133px] mt-[10px] bg-[#1e1e1e] mr-[1px] border border-[#2b2b2b]" />
        <div className="h-[4px] border-b border-[#2b2b2b]" />
        <div className="h-[19px] flex items-end">
          <div className="w-[112px] h-[14px] bg-[#2f2f2f] flex items-center justify-end pr-[6px]">Anim</div>
        </div>
        <div className="h-[31px] flex items-end justify-end pb-[1px] bg-[#404040] border-t border-[#4a4a4a] mr-[1px]">
          <Strip size={11} className="h-[14px] pr-[2px]" cells={[["lay", 16], ["lay", 17], ["lay", 17], ["lay", 15]]} />
        </div>
        <div className="h-[138px] bg-[#1e1e1e] mr-[1px]" />
        <div className="h-[10px] mr-[3px] flex items-center">
          <div className="flex-1 h-[6px] bg-[#555] rounded-[2px] mr-[5px]" />
          <TriH right />
        </div>
      </div>
      <div className="w-[15px] shrink-0 pl-[1px] pt-px text-[8px] text-[#bdbdbd]">
        <div className="h-[69px] bg-[#2b2b2b] [writing-mode:vertical-rl] text-center leading-[13px] whitespace-nowrap tracking-[-0.3px]">Attribute Editor</div>
        <div className="h-[105px] bg-[#6a6a6a] text-white [writing-mode:vertical-rl] text-center leading-[13px] whitespace-nowrap tracking-[-0.2px]">Channel Box / Layer Editor</div>
      </div>
    </>
  );
}

function Footer() {
  return (
    <>
      <div className="h-[41px] flex items-center border-t border-[#2b2b2b] shrink-0">
        <Grip className="w-[4px] h-[36px] ml-[4px]" />
        <div className="relative ml-[4px] w-[1122px] h-[38px] bg-[#272727] text-[8px] text-[#777] flex items-end tracking-[-0.3px]">
          <span className="w-[10px] h-full bg-[#454545] ml-[4px] text-[#ddd] flex items-end justify-center">1</span>
          <span className="absolute left-[713px] top-[-2px]">80</span>
          <span className="absolute left-[757px] top-[-2px]">85</span>
          <span className="absolute left-[756px] bottom-0 w-px h-[29px] bg-[#aaa]" />
        </div>
        <div className="w-[12px] h-[11px] bg-[#1e1e1e] mb-[18px]" />
        <Strip size={12} className="h-[14px] mb-[19px] ml-[5px]" cells={[["pstart", 15.3], ["pprev", 15.3], ["pkeyp", 15.3], ["pback", 15.3], ["pplay", 15.3], ["pkeyn", 15.3], ["pnext", 15.3], ["pend", 15.3]]} />
      </div>
      <div className="h-[23px] flex items-center shrink-0 text-[8px] text-[#e0e0e0] border-t border-[#323232] tracking-[-0.24px]">
        <Grip className="w-[4px] h-[18px] ml-[4px]" />
        <span className="w-[45px] h-[14px] ml-[4px] bg-[#1e1e1e] pl-[3px] leading-[14px]">1</span>
        <span className="w-[44px] h-[14px] ml-[5px] bg-[#1e1e1e] pl-[4px] leading-[14px]">1</span>
        <div className="w-[850px] h-[14px] ml-[11px] bg-[#323232] rounded-[2px]">
          <div className="w-[514px] h-full bg-[#5a5a5a] rounded-[2px] flex items-center px-[3px] gap-[4px]">
            <span className="w-[8px] h-[10px] bg-[#aaa] rounded-[2px]" />1<span className="flex-1" />120
            <span className="w-[8px] h-[10px] bg-[#aaa] rounded-[2px]" />
          </div>
        </div>
        <span className="w-[45px] h-[14px] ml-[3px] bg-[#1e1e1e] pl-[4px] leading-[14px]">120</span>
        <span className="w-[45px] h-[14px] ml-[5px] bg-[#1e1e1e] pl-[4px] leading-[14px]">200</span>
        <span className="ml-[6px]"><Tri s={5} c="#888" /></span>
        <span className="w-[68px] h-[14px] ml-[5px] border border-[#474747] pl-[3px] leading-[12px]">No Anim Layer</span>
        <span className="ml-[5px]"><Tri s={5} c="#888" /></span>
        <span className="w-[65px] h-[14px] ml-[7px] border border-[#474747] pl-[1px] leading-[12px] whitespace-nowrap">No Character Set</span>
        <Strip size={13} className="h-[15px] ml-[5px]" cells={[["key", 14, "on"]]} />
        <Strip size={13} className="h-[15px] ml-[6px]" cells={[["runner", 15]]} />
      </div>
      <div className="h-[23px] flex items-center shrink-0 text-[8px] text-[#e0e0e0] border-b border-[#282828]">
        <span className="w-[42px] pl-[19px] tracking-[-0.2px]">MEL</span>
        <span className="w-[399px] h-[16px] bg-[#1e1e1e]" />
        <span className="w-[813px] h-[16px] ml-[5px] bg-[#1e1e1e] pl-[4px] leading-[16px] tracking-[-0.42px]">// Result: connectWindow|tl|cwForm|connectWindowPane|leftSideCW</span>
        <Strip size={13} className="h-[15px] ml-[1px]" cells={[["script", 15]]} />
      </div>
      <div className="h-[15px] flex items-center shrink-0">
        <Grip className="w-[4px] h-[12px] ml-[4px]" />
      </div>
    </>
  );
}

const apps: [React.ReactNode, boolean?][] = [
  [<><path d="M2 4h7l2 2h11v15H2z" fill="#f0d47a" /><path d="M5 3h8v6H5zM4 10h17v9H4z" fill="#f8e8a8" /><path d="M7 16h11v6H7z" fill="#8fc8e8" /><path d="M9 18h7v4H9z" fill="#f6e6a0" /></>, true],
  [<><circle cx="12" cy="12" r="11.500" fill="#1ed760" /><path d="M5.500 8.500q7-2 13.500 1.500M6.500 12.500q6-1.500 11 1.500M7.500 16q5-1.200 9 1" fill="none" stroke="#123" strokeWidth="2" strokeLinecap="round" /></>],
  [<><path d="M0 0h24v24H0z" fill="#dff3f3" /><path d="M3 17l5-14h6l7 5v10l-4-2-3-5-3 5-3-3z" fill="#18a9b4" /><path d="M8 3h6l5 5-6 4-6-3z" fill="#0c6f80" /></>, true],
  [<><circle cx="12" cy="12" r="11.500" fill="#12233a" /><circle cx="12" cy="12" r="5.500" fill="#5aa0d8" /><path d="M12 3v18M3 12h18M5.500 5.500l13 13M18.500 5.500l-13 13" stroke="#5aa0d8" strokeWidth="1.800" strokeDasharray="4 3" /><circle cx="12" cy="12" r="2.500" fill="#12233a" /></>],
  [<><circle cx="12" cy="12" r="11" fill="#1c0709" /><path d="M3 6q6-6 12-3l-3 5 6-3q4 4 2 8l-6-2 3 7q-4 4-8 2l1-6-5 3q-4-4-2-8l5 1z" fill="#c9202f" /><path d="M8 10l4 2-2 4" stroke="#1c0709" strokeWidth="1.500" fill="none" /></>],
  [<path d="M19 2L5 11l13 11v-7l-5-4 6-4zM9 9l4 5-4 2z" fill="#d92a3c" />],
  [<><path d="M1 1h22v22H1z" fill="#151515" /><path d="M12 12L8 4l5-2zM12 12l8-5 1 5z" fill="#e0403a" /><path d="M12 12L3 8l4-4z" fill="#f2c12e" /><path d="M12 12l-9 3 1-5z" fill="#f08030" /><path d="M12 12l-5 9-3-4z" fill="#48b04c" /><path d="M12 12l2 10-5-1z" fill="#3a78d0" /><path d="M12 12l8 7-4 3z" fill="#9a48c8" /><path d="M12 12l7-8-5-2z" fill="#fff06a" /><circle cx="12" cy="12" r="4" fill="#f5d23a" /></>],
  [<><path d="M1 0h22v24H1z" fill="#b30d0d" /><path d="M5 20V4h8M5 11h6M12 11h8l-8 9h8" fill="none" stroke="#fff" strokeWidth="3" /></>],
  [<><circle cx="12" cy="12" r="11" fill="#f4f0f6" stroke="#c6a4d8" /><path d="M10 17V7l6-1.500v9.500" fill="none" stroke="#c44fb4" strokeWidth="1.800" /><circle cx="8.500" cy="17" r="2" fill="#5a7fe0" /><circle cx="14.500" cy="15" r="2" fill="#e0559a" /></>],
  [<><path d="M1 2h22v16H1z" fill="#dcdcdc" /><path d="M3 4h18v12H3z" fill="#3b8fc4" /><path d="M9 4h6v6H9z" fill="#f0b440" /><path d="M12 9h8v7h-8z" fill="#72bf4a" /><path d="M7 19h10v3H7z" fill="#c8c8c8" /></>],
  [<><circle cx="12" cy="12" r="11.500" fill="#fff" /><path d="M2.500 6A11.500 11.500 0 0 1 22.500 7H12a5 5 0 0 0-4.500 3z" fill="#e2453a" /><path d="M2.500 6L8 15a5 5 0 0 0 5 1.800L9.500 23.200A11.500 11.500 0 0 1 2.500 6z" fill="#34a853" /><path d="M22.600 7.500A11.500 11.500 0 0 1 10 23.300L16 14.500q1.500-4-1-7z" fill="#fbc116" /><circle cx="12" cy="12" r="4.700" fill="#4a86e8" stroke="#fff" strokeWidth="1.300" /></>, true],
  [<><path d="M4 3l8 2 7 4 2 10-9 3-7-5z" fill="#5d3b1c" /><path d="M6 4l4 5-5 2zM14 6l5 3-5 2z" fill="#e44" /><path d="M10 8l5 4-6 3z" fill="#f4c030" /><path d="M6 12l5 5-4 2zM13 4l3 3-5 1z" fill="#5c5" /><path d="M14 13l5 6-6 1z" fill="#e8e8d8" /></>],
  [<path d="M1 2h22v20H1z" fill="#8b0a0e" />],
  [<><circle cx="12" cy="12" r="11.500" fill="#191c12" /><path d="M6 4l5 8-4 8q-6-8-1-16z" fill="#2f6a34" /><path d="M11 3q8 2 10 9l-7-2z" fill="#b7c92e" /><path d="M14 9l-4 6 5 6z" fill="#d8d02a" /><path d="M15 15h7v7h-7z" fill="#f0c020" /></>, true],
  [<><path d="M9 2h14v20H9z" fill="#fff" stroke="#2a579a" /><path d="M15 6h6M15 10h6M15 14h6M15 18h6" stroke="#2a579a" strokeWidth="1.500" /><path d="M1 4l13-2.500v21L1 20z" fill="#2a579a" /></>, true],
];

function Taskbar() {
  return (
    <div className="h-[27px] shrink-0 flex items-center text-white bg-[linear-gradient(180deg,rgba(255,215,190,.14),transparent_30%),linear-gradient(92deg,#a5664e_0%,#8d5543_12%,#a86e58_22%,#99604c_45%,#9b604b_60%,#b37961_70%,#c48e76_84%,#b07660_89%,#8b5544_100%)]">
      <div className="w-[34px] flex justify-center">
        <svg width="17" height="17" viewBox="0 0 17 17"><path d="M0 2.500l7-1v6.500H0zM8 1.300L17 0v8H8zM0 9h7v6.500l-7-1zM8 9h9v8l-9-1.300z" fill="#fff" /></svg>
      </div>
      <Grip className="w-[4px] h-[20px]" />
      <div className="flex ml-[3px]">
        {apps.map(([svg, open], i) => (
          <div key={i} className="w-[41.5px] flex justify-center">
            <div className={clsx("w-[38px] h-[26px] flex items-center justify-center relative", open && "border border-[#efd2c4]/60", i === 2 ? "bg-[#f1ece8]" : open && "bg-[#dfb8a6]/60")}>
              <svg width="22" height="22" viewBox="0 0 24 24">{svg}</svg>
              {i === 2 && <span className="absolute bottom-0 text-[5px] leading-[6px] text-[#274]">MAYA</span>}
              {i === 12 && <span className="absolute text-[10px] font-bold leading-none">Fl</span>}
              {i === 14 && <span className="absolute left-[10px] text-[10px] font-bold leading-none">W</span>}
            </div>
          </div>
        ))}
      </div>
      <div className="flex-1" />
      <Grip className="w-[4px] h-[20px] mr-[9px]" />
      <svg width="20" height="13" viewBox="0 0 20 13" className="mr-[9px]">
        <path d="M.5.5h19v12H.5z" fill="none" stroke="#fff" />
        <path d="M2.500 3.500h15M2.500 6.500h15" stroke="#fff" strokeWidth="2" strokeDasharray="1.500 1" />
        <path d="M5 9.800h10" stroke="#fff" strokeWidth="1.600" />
      </svg>
      <Tri s={6} c="#fff" up />
      <svg width="11" height="12" viewBox="0 0 11 12" className="ml-[8px]"><path d="M1.500 0v12M2 1h4v1h4v5H6V6H2z" fill="#fff" stroke="#fff" /></svg>
      <svg width="11" height="12" viewBox="0 0 11 12" className="ml-[5px]"><path d="M2 2h8v6H2zM6 8v3M3 11h6M1 1v9" fill="none" stroke="#fff" strokeWidth="1.200" /></svg>
      <svg width="12" height="12" viewBox="0 0 12 12" className="ml-[5px]"><path d="M0 4h2.500L6 1v10L2.500 8H0z" fill="#fff" /><path d="M7.500 4q1.500 2 0 4M9 2.500q3 3.500 0 7" fill="none" stroke="#fff" /></svg>
      <div className="w-[64px] flex flex-col items-center text-[8.5px] leading-[11px] tracking-[-0.45px]">
        <span>12:28</span>
        <span>06/01/2016</span>
      </div>
    </div>
  );
}

function Rows({ x, y }: { x: number; y: number }) {
  return (
    <g>
      <rect x={x} y={y} width="12" height="3.200" rx="1" fill="#fff" />
      <rect x={x + 0.5} y={y + 4.7} width="11" height="2.600" rx="1" fill="none" stroke="#cfc6e2" />
      <rect x={x + 0.5} y={y + 9} width="11" height="2.600" rx="1" fill="none" stroke="#cfc6e2" />
    </g>
  );
}

function Graph() {
  const label = "absolute whitespace-nowrap text-[10px] leading-[14px]";
  return (
    <div className="relative w-[669px] h-[231px] bg-[#1d1d1d] overflow-hidden ml-[1px]">
      <svg width="669" height="231" viewBox="51 405 669 231" fill="none">
        <g stroke="#292929">
          {Array.from({ length: 23 }, (_, i) => <path key={i} d={`M${80.5 + i * 29} 405v231`} />)}
          {Array.from({ length: 7 }, (_, i) => <path key={i} d={`M51 ${433.5 + i * 29}h669`} />)}
        </g>
        <g stroke="#57b552">
          <path d="M108 495C142 495 136 538 166 538" />
          <path d="M108 583C142 583 136 538 166 538" />
          <path d="M285 538C325 538 315 484 354 484" />
          <path d="M285 538C325 538 310 586 349 586" />
          <path d="M382 496C412 524 415 550 440 574" />
        </g>
        <path d="M134 515l7-1v8zM134 560l7-5v8zM316 512l6-7 1 8zM314 563l7-1-2 8zM407 538v-8l7 5z" fill="#4be84a" />
        <g stroke="#0e0e0e">
          <path d="M46 484.500h60q2 0 2 2v19q0 2-2 2H46zM46 572.500h60q2 0 2 2v19q0 2-2 2H46z" fill="#666" />
          <rect x="354.500" y="472.500" width="118.500" height="24" rx="2" fill="#4a3083" />
          <rect x="166.500" y="526.500" width="119" height="24" rx="2" fill="#4a3083" />
        </g>
        <rect x="349" y="574.500" width="119" height="24.500" rx="2.500" fill="#4a3083" stroke="#64f0c0" strokeWidth="1.800" />
        <Rows x={86} y={489} /><Rows x={86} y={577} /><Rows x={450.5} y={477} /><Rows x={262.5} y={531} /><Rows x={445.5} y={580} />
        <g stroke="#151515" strokeWidth=".8">
          <g fill="#4cf24f"><circle cx="108.500" cy="495" r="5.800" /><circle cx="108.500" cy="583" r="5.800" /><circle cx="349" cy="586.500" r="5.800" /><circle cx="468" cy="586.500" r="5.800" /></g>
          <g fill="#fda912"><circle cx="166.500" cy="538" r="5.800" /><circle cx="285" cy="538" r="5.800" /><circle cx="354.500" cy="484" r="5.800" /></g>
          <circle cx="473" cy="484" r="5.800" fill="#fff" />
        </g>
        <path d="M374.500 475v17M366 483.500h6" stroke="#c21f35" strokeWidth="1.500" /><path d="M377 483.500h7" stroke="#3c7fe0" strokeWidth="1.500" />
        <path d="M371.500 479.500l6 7.500M377.500 479.500l-6 7.500" stroke="#fff" strokeWidth="3" />
        <path d="M178 531v13M194.500 531v13" stroke="#7fa062" /><path d="M180 540h13M182.500 538l-3 2 3 2M190.500 538l3 2-3 2M183 532h5M185.500 532v6" stroke="#d3163a" strokeWidth="1.500" />
        <path d="M360 577h18v18h-18z" fill="#fff" />
        <path d="M365.500 583v7M362.500 584.500l6 4M368.500 584.500l-6 4M370.500 586.500h6" stroke="#111" strokeWidth="1.200" /><circle cx="373.500" cy="583.800" r="1" fill="#111" /><circle cx="373.500" cy="589.200" r="1" fill="#111" />
      </svg>
      <span className={clsx(label, "left-[-2px] top-[61px] text-[#e2e2e2]")}>e1</span>
      <span className={clsx(label, "left-[-2px] top-[149px] text-[#e2e2e2]")}>e2</span>
      <span className={clsx(label, "left-[306px] top-[51px] text-[#e8e8e8]")}>condition1</span>
      <span className={clsx(label, "left-[118px] top-[104px] text-[#e8e8e8]")}>distanceDimensionShape1</span>
      <span className={clsx(label, "left-[301px] top-[154px] text-[#5fdca0]")}>multiplyDivide1</span>
    </div>
  );
}

function NodeEditor() {
  return (
    <div className="absolute left-[42px] top-[337px] w-[685px] h-[307px] bg-white border border-[#ddd] px-[5px] flex flex-col">
      <div className="h-[19px] flex items-center shrink-0">
        <MayaLogo s={11} />
        <span className="flex-1 text-center text-[10px] tracking-[-0.1px] text-[#444] pl-[47px]">Node Editor</span>
        <span className="w-[5px] h-[1.5px] bg-[#333] mr-[12px]" />
        <span className="w-[7px] h-[6px] border border-t-2 border-[#333] mr-[6px] mb-[4px]" />
        <span className="w-[29px] h-[13px] bg-[#fde6e6] mb-[6px] mr-[-1px]" />
      </div>
      <div className="h-[282px] border-2 border-[#777] bg-[#3b3b3b] flex flex-col overflow-hidden">
        <Menu className="h-[11px] pl-[4px]" items={[["Edit", 24], ["View", 26], ["Bookmarks", 45], ["Tabs", 28], ["Options", 38], ["Display", 34.5], ["Show", 29.5], ["Help", 30]]} />
        <div className="h-[19px] flex items-center shrink-0">
          <Strip
            size={13}
            className="h-[17px]"
            cells={[["nadd", 14], ["|", 9], ["sync", 17], ["nin", 18], ["nio", 18], ["nout", 18], ["|", 7], ["nsel", 18], ["nad", 18], ["nrem", 18], ["narr", 18], ["|", 6], ["l1", 18], ["l2", 18], ["l3", 18], ["l4", 18], ["search", 17, "br"], ["nfr", 18, "br"], ["|", 8], ["bk1", 18], ["bk2", 18], ["bk3", 19], ["bk4", 18], ["|", 6], ["g1", 18], ["g2", 18, "on"], ["g3", 19], ["unlock", 22], ["|", 5], ["d0", 19], ["d1", 18]]}
          />
          <span className="w-[17px] h-[16px] bg-[#1a1a1a] text-[#ddd] text-[8px] leading-[16px] text-center">-1</span>
          <Strip size={13} className="h-[17px]" cells={[["", 1], ["d1", 19], ["d3", 18], ["|", 5], ["hash", 18, "on"], ["mgrid", 18], ["|", 6], ["dashbox", 18]]} />
          <span className="flex-1 h-[12px] mb-[4px] bg-[#1a1a1a]" />
        </div>
        <div className="h-[16px] flex text-[8px] text-[#eee] shrink-0">
          <span className="w-[51px] h-[13px] mt-[2px] bg-[#5f5f5f] leading-[13px] text-center tracking-[-0.2px]">Untitled_1</span>
          <span className="w-[20px] h-[13px] mt-[2px] bg-[#2d2d2d] leading-[13px] text-center">+</span>
        </div>
        <Graph />
      </div>
    </div>
  );
}

function ScrollV() {
  return (
    <div className="w-[8px] bg-[#2b2b2b] flex flex-col items-center py-[2px] gap-[3px]">
      <Tri s={6} up />
      <div className="w-[6px] flex-1 bg-[#5a5a5a] rounded-[2px]" />
      <Tri s={6} />
    </div>
  );
}

function ScrollH() {
  return (
    <div className="h-[9px] bg-[#2b2b2b] flex items-center pl-[3px] pr-[11px] gap-[3px]">
      <TriH />
      <div className="h-[6px] flex-1 bg-[#5a5a5a] rounded-[2px]" />
      <TriH right />
    </div>
  );
}

const attrRows: [string, number, string?][] = [
  ["multiplyDivide1", 22, "-"], ["caching", 36], ["nodeState", 36], ["frozen", 36], ["operation", 36],
  ["input1", 36, "+"], ["input2", 36, "+"], ["output", 36, "+"],
];

function ConnectionEditor() {
  return (
    <div className="absolute left-[778px] top-[300px] w-[356px] h-[342px] bg-[#fe9c8c] border border-[#d98a7c] px-[4px] flex flex-col">
      <div className="h-[20px] flex items-center shrink-0">
        <span className="bg-[#b6f0f0] ml-[1px]"><MayaLogo s={11} /></span>
        <span className="flex-1 text-center text-[10.5px] tracking-[-0.4px] text-[#5c3a38] pl-[42px]">Connection Editor</span>
        <span className="w-[5px] h-[1.5px] bg-[#3a2020] mr-[12px]" />
        <span className="w-[7px] h-[6px] border border-t-2 border-[#3a2020] mr-[5px] mb-[4px]" />
        <span className="w-[30px] h-[13px] bg-[#f9464c] mb-[7px] mr-[-1px] flex items-center justify-center">
          <svg width="6" height="6" viewBox="0 0 6 6"><path d="M.5.5l5 5M5.500.5l-5 5" stroke="#fff" strokeWidth="1.300" /></svg>
        </span>
      </div>
      <div className="h-[316px] bg-[#3b3b3b] flex flex-col text-[8px] text-[#ececec] border border-[#333]">
        <Menu className="h-[10px] pl-[4.5px]" items={[["Options", 38], ["Left Display", 49.5], ["Right Display", 55.5], ["Help", 30]]} />
        <div className="h-[15px] mt-[3px] flex gap-[1px] font-semibold leading-[14px] text-center text-[#eee] tracking-[-0.36px]">
          <span className="flex-1 bg-[#535353] pr-[4px]">Reload Left</span>
          <span className="flex-1 bg-[#535353] pr-[4px]">Reload Right</span>
        </div>
        <div className="h-[18px] flex items-center text-center tracking-[-0.2px]">
          <span className="w-[120px] pl-[14px]">Outputs</span>
          <span className="w-[103px] h-[15px] leading-[14px] bg-[#5d5d5d] font-semibold">from -&gt; to</span>
          <span className="flex-1 pr-[7px]">Inputs</span>
        </div>
        <div className="h-[214px] flex gap-[3px]">
          <div className="w-[171px] flex flex-col">
            <div className="flex-1 flex bg-[#1e1e1e]">
              <div className="flex-1">
                {attrRows.map(([t, pad, m]) => (
                  <div key={t} className="h-[13.33px] flex items-center">
                    <span className="w-[14px] flex justify-center shrink-0">
                      {m && (
                        <svg width="10" height="10" viewBox="0 0 10 10" fill="none" stroke="#eee">
                          <circle cx="5" cy="5" r="4.300" />
                          <path d={m === "+" ? "M2.500 5h5M5 2.500v5" : "M2.500 5h5"} strokeWidth="1.400" />
                        </svg>
                      )}
                    </span>
                    <span style={{ paddingLeft: pad }} className="tracking-[-0.27px]">{t}</span>
                  </div>
                ))}
              </div>
              <ScrollV />
            </div>
            <ScrollH />
          </div>
          <div className="flex-1 flex flex-col">
            <div className="flex-1 flex bg-[#1e1e1e]"><div className="flex-1" /><ScrollV /></div>
            <ScrollH />
          </div>
        </div>
        <div className="h-[32px] flex text-center pt-[10px] border-b border-[#2d2d2d] tracking-[-0.3px]">
          <span className="w-[154px] pl-[5px]">multiplyDivide1</span>
          <span className="w-[14px] h-[15px] mt-[5px] bg-[#5a5a5a] leading-[14px]">&lt;</span>
          <span className="w-[14px] h-[15px] mt-[5px] ml-[4px] bg-[#5a5a5a] leading-[14px]">&gt;</span>
          <span className="flex-1 pl-[33px] pr-[1px]">Inputs</span>
        </div>
        <div className="flex gap-[3px] px-[2px] pt-[4px] font-semibold text-center leading-[15px] tracking-[-0.38px]">
          {["Clear All", "Remove", "Break", "Make", "Close"].map((t) => (
            <span key={t} className={clsx("flex-1 h-[16px]", t === "Break" || t === "Make" ? "bg-[#434343] text-[#7b7b7b]" : "bg-[#5a5a5a]")}>{t}</span>
          ))}
        </div>
      </div>
    </div>
  );
}

export default function App() {
  return (
    <div className="relative w-[1280px] h-[720px] overflow-hidden bg-[#3b3b3b] flex flex-col font-['Open_Sans','Noto_Sans',sans-serif]">
      <Header />
      <div className="flex h-[496px] shrink-0">
        <Toolbox />
        <Outliner />
        <Viewport />
        <ChannelBox />
      </div>
      <Footer />
      <Taskbar />
      <NodeEditor />
      <ConnectionEditor />
      <span className="absolute right-0 top-[612px] w-[2px] h-[82px] rounded-l bg-[#e8e020]" />
      <svg className="absolute left-[918px] top-[300px]" width="30" height="30" viewBox="0 0 30 30">
        <circle cx="14" cy="14.500" r="12" fill="none" stroke="#e0121c" strokeWidth="2" />
        <path d="M14.500 14v11.500l2.700-2.400 2 4.200 2-1-2-4h3.600z" fill="#fff" stroke="#333" strokeWidth=".7" />
      </svg>
    </div>
  );
}
